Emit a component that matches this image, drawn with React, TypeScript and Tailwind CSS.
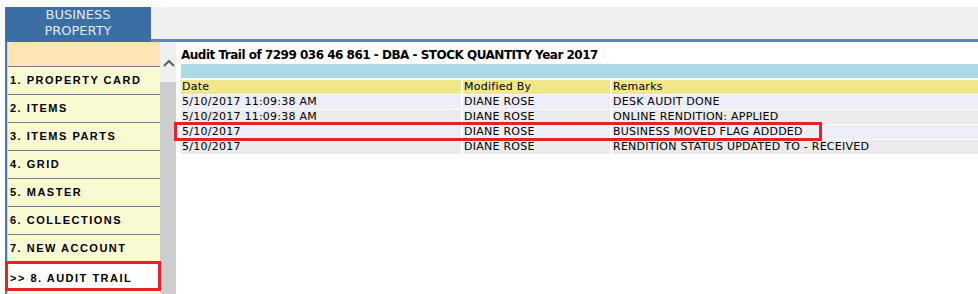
import React from 'react';

interface AuditRow {
    date: string;
    modifiedBy: string;
    remarks: string;
}

const rows: AuditRow[] = [
    { date: '5/10/2017 11:09:38 AM', modifiedBy: 'DIANE ROSE', remarks: 'DESK AUDIT DONE' },
    { date: '5/10/2017 11:09:38 AM', modifiedBy: 'DIANE ROSE', remarks: 'ONLINE RENDITION: APPLIED' },
    { date: '5/10/2017', modifiedBy: 'DIANE ROSE', remarks: 'BUSINESS MOVED FLAG ADDDED' },
    { date: '5/10/2017', modifiedBy: 'DIANE ROSE', remarks: 'RENDITION STATUS UPDATED TO - RECEIVED' },
];

const menu = [
    '1. PROPERTY CARD',
    '2. ITEMS',
    '3. ITEMS PARTS',
    '4. GRID',
    '5. MASTER',
    '6. COLLECTIONS',
    '7. NEW ACCOUNT',
];

const ChevronUp = () => (
    <svg width="12" height="8" viewBox="0 0 12 8" className="ml-[3px]">
        <polyline points="1,7 6,2 11,7" fill="none" stroke="#5f5f5f" strokeWidth="2" />
    </svg>
);

const App: React.FC = () => {
    return (
        <div className="w-[978px] h-[294px] overflow-hidden bg-white pt-[7px] font-['DejaVu_Sans',sans-serif]">
            {/* top tab strip */}
            <div className="flex ml-[5px] h-[35px]">
                <div className="w-[146px] bg-[#3b6ea5] text-[#e3ebf5] text-[13px] leading-[16px] text-center">
                    BUSINESS
                    <br />
                    PROPERTY
                </div>
                <div className="flex-1 flex flex-col">
                    <div className="h-[32px] bg-[#f0f0f0]" />
                    <div className="h-[3px] bg-[#5b87be]" />
                </div>
            </div>

            <div className="relative flex ml-[5px] h-[252px]">
                <div className="w-[2px] bg-[#4a78b2]" />
                <div className="w-[1px] bg-[#d4d4d4]" />

                {/* side menu */}
                <nav className="w-[152px] flex flex-col bg-[#fafad2] font-['Liberation_Sans',Arial,sans-serif]">
                    <div className="h-[25px] bg-[#ffe4b5] border-b border-[#808080]" />
                    {menu.map((item) => (
                        <div
                            key={item}
                            className="h-[28px] flex items-center pl-[2px] border-b border-[#808080] text-[11px] font-bold tracking-[1.5px] text-black"
                        >
                            {item}
                        </div>
                    ))}
                    <div className="h-[30px] flex items-center pl-[2px] bg-white text-[11px] font-bold tracking-[1.5px] text-black">
                        &gt;&gt; 8. AUDIT TRAIL
                    </div>
                </nav>
                <div className="absolute left-0 top-[219px] w-[156px] h-[30px] border-[3px] border-[#e8202a]" />

                {/* scrollbar */}
                <div className="w-[16px] flex flex-col bg-[#f0f0f0] pt-[17px]">
                    <ChevronUp />
                    <div className="mt-[15px] flex-1 bg-[#cdcdcd]" />
                </div>

                {/* content */}
                <div className="relative flex-1 pl-[5px] text-black">
                    <div className="h-[22px] pt-[6px] text-[12px] leading-[15px] font-bold tracking-[-0.5px] whitespace-nowrap">
                        Audit Trail of 7299 036 46 861 - DBA - STOCK QUANTITY Year 2017
                    </div>
                    <div className="h-[14px] bg-[#add8e6]" />
                    <div className="mt-[2px] grid grid-cols-[280px_147px_1fr] gap-x-[2px] gap-y-[1px] text-[11px] leading-[14px] tracking-[0.25px] whitespace-nowrap">
                        <div className="bg-[#f0e68c] pl-[1px]">Date</div>
                        <div className="bg-[#f0e68c] pl-[1px]">Modified By</div>
                        <div className="bg-[#f0e68c] pl-[1px]">Remarks</div>
                        {rows.map((row, i) => {
                            const bg = i % 2 === 0 ? 'bg-[#eeeefb]' : 'bg-[#ebebeb]';
                            return (
                                <React.Fragment key={i}>
                                    <div className={`${bg} pl-[1px]`}>{row.date}</div>
                                    <div className={`${bg} pl-[1px]`}>{row.modifiedBy}</div>
                                    <div className={`${bg} pl-[1px]`}>{row.remarks}</div>
                                </React.Fragment>
                            );
                        })}
                    </div>
                    <div className="absolute left-[-2px] top-[80px] w-[648px] h-[19px] border-[3px] border-[#e8202a]" />
                </div>
            </div>
        </div>
    );
};

export default App;
